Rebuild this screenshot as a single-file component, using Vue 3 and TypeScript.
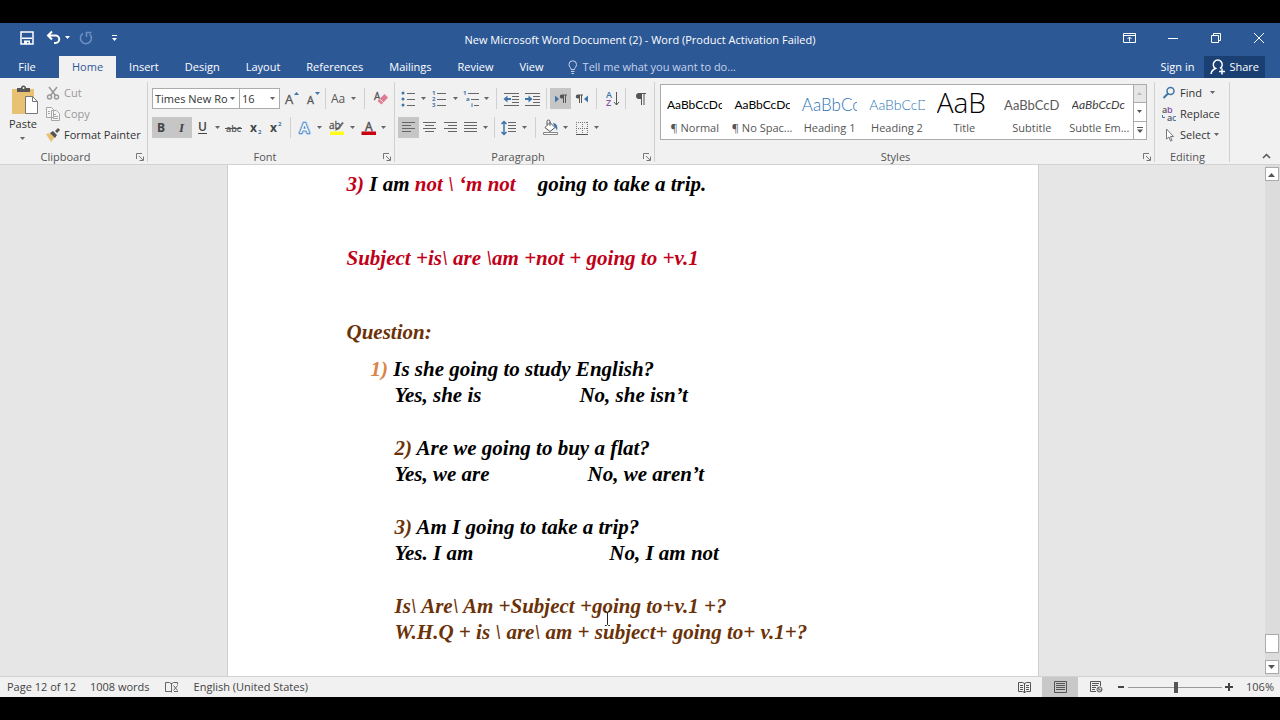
<script setup lang="ts">
import { ref } from 'vue'

interface Tool {
  id: string
  label?: string
  size?: string
  on?: boolean
}

const caret = (label: string): Tool => ({ id: 'caret', label, size: 'w10' })
const sep = (size = 'w7'): Tool => ({ id: 'sep', size })

const fontRow1: Tool[] = [
  { id: 'grow', label: 'Increase Font Size' },
  { id: 'shrink', label: 'Decrease Font Size' },
  sep(),
  { id: 'case', label: 'Change Case', size: 'w20' },
  caret('Change Case options'),
  sep('w11'),
  { id: 'eraser', label: 'Clear All Formatting' },
]

const fontRow2: Tool[] = [
  { id: 'bold', label: 'Bold', size: 'w20', on: true },
  { id: 'italic', label: 'Italic', size: 'w20', on: true },
  { id: 'underline', label: 'Underline' },
  caret('Underline options'),
  { id: 'strike', label: 'Strikethrough', size: 'w22' },
  { id: 'sub', label: 'Subscript' },
  { id: 'sup', label: 'Superscript' },
  sep(),
  { id: 'effects', label: 'Text Effects' },
  caret('Text Effects options'),
  { id: 'highlight', label: 'Text Highlight Color', size: 'w23' },
  caret('Highlight options'),
  { id: 'color', label: 'Font Color' },
  caret('Font Color options'),
]

const paraRow1: Tool[] = [
  { id: 'bullets', label: 'Bullets' },
  caret('Bullet options'),
  { id: 'numbers', label: 'Numbering', size: 'w22' },
  caret('Numbering options'),
  { id: 'levels', label: 'Multilevel List' },
  caret('Multilevel options'),
  sep('w9'),
  { id: 'outdent', label: 'Decrease Indent' },
  { id: 'indent', label: 'Increase Indent' },
  sep(),
  { id: 'ltr', label: 'Left-to-Right', on: true },
  { id: 'rtl', label: 'Right-to-Left' },
  sep('w9'),
  { id: 'sort', label: 'Sort' },
  sep(),
  { id: 'marks', label: 'Show Marks' },
]

const paraRow2: Tool[] = [
  { id: 'left', label: 'Align Left', on: true },
  { id: 'center', label: 'Center' },
  { id: 'right', label: 'Align Right' },
  { id: 'justify', label: 'Justify', size: 'w20' },
  caret('Justify options'),
  sep('w7'),
  { id: 'spacing', label: 'Line Spacing', size: 'w22' },
  caret('Spacing options'),
  sep('w11'),
  { id: 'shading', label: 'Shading', size: 'w20' },
  caret('Shading options'),
  { id: 'borders', label: 'Borders' },
  caret('Border options'),
]

const G = '#555'
const B = '#3f74a8'
const lines = (rows: number[][], c = '#666') =>
  `<path stroke="${c}" d="${rows.map(([x, y, w]) => `M${x} ${y}h${w}`).join('')}"/>`

/* Glyphs are drawn on a 20 x 20 grid. */
const glyphs: Record<string, string> = {
  grow: `<text x="4" y="15" font-size="13" fill="${G}" stroke="${G}" stroke-width=".3">A</text><path fill="${B}" d="M13 6l2.500-3 2.500 3z"/>`,
  shrink: `<text x="5" y="15" font-size="11" fill="${G}" stroke="${G}" stroke-width=".3">A</text><path fill="${B}" d="M13 3h5l-2.500 3z"/>`,
  case: `<text x="2" y="14" font-size="12" fill="${G}">Aa</text>`,
  eraser: `<text x="3" y="11" font-size="10" fill="${G}" stroke="${G}" stroke-width=".3">A</text><path fill="#e07a92" d="M13.500 5l3.500 3.500-6.500 7-4-3.500z"/><path stroke="#f1f1f1" d="M8.500 10l4 3.500"/>`,
  bold: `<text x="5" y="14" font-size="12" font-weight="700" fill="#444">B</text>`,
  italic: `<text x="7" y="14" font-size="13" font-style="italic" font-weight="700" font-family="Liberation Serif" fill="#444">I</text>`,
  underline: `<text x="5" y="13" font-size="12" font-weight="600" fill="#444">U</text><path stroke="#444" d="M5 15.500h9"/>`,
  strike: `<text x="2" y="14" font-size="9" font-weight="600" fill="${G}">abc</text><path stroke="${G}" d="M1 10.500h17"/>`,
  sub: `<text x="4" y="14" font-size="12" font-weight="700" fill="#444">x</text><text x="12" y="16" font-size="6" font-weight="700" fill="${B}">2</text>`,
  sup: `<text x="3" y="14" font-size="12" font-weight="700" fill="#444">x</text><text x="11" y="8" font-size="6" font-weight="700" fill="${B}">2</text>`,
  effects: `<g font-size="14" stroke-linejoin="round"><text x="5" y="15" fill="#b5d3ee" stroke="#b5d3ee" stroke-width="4">A</text><text x="5" y="15" fill="#3a78b8" stroke="#3a78b8" stroke-width="2">A</text><text x="5" y="15" fill="#fff" stroke="#fff" stroke-width=".4">A</text></g>`,
  highlight: `<text x="2" y="11" font-size="10" fill="${G}" stroke="${G}" stroke-width=".3">ab</text><path stroke="#666" stroke-width="2" d="M16 4.500l-5 6.500"/><path fill="${G}" d="M8 13l2-3.500 2 1.500z"/><path fill="#ffff1a" d="M3 13.500h14v3.500H3z"/>`,
  color: `<text x="6" y="13" font-size="12" fill="${G}" stroke="${G}" stroke-width=".5">A</text><path fill="#c80010" d="M2.500 13.500H17v3.500H2.500z"/>`,
  bullets: `<g fill="${B}"><circle cx="4" cy="4" r="1.500"/><circle cx="4" cy="10" r="1.500"/><circle cx="4" cy="16" r="1.500"/></g>${lines([[8, 4.5, 8], [8, 10.5, 8], [8, 16.5, 8]])}`,
  numbers: `<g fill="${B}" font-size="6" font-weight="700"><text x="2" y="6">1</text><text x="2" y="12">2</text><text x="2" y="18">3</text></g>${lines([[7, 4.5, 9], [7, 10.5, 9], [7, 16.5, 9]])}`,
  levels: `<g fill="${B}" font-size="6" font-weight="700"><text x="1" y="6">1</text><text x="4" y="12">a</text><text x="9" y="18">i</text></g>${lines([[6, 4.5, 11], [9, 10.5, 8], [12, 16.5, 5]])}`,
  outdent: `${lines([[2, 4.5, 15], [10, 7.5, 7], [10, 10.5, 7], [10, 13.5, 7], [2, 16.5, 15]])}<path stroke="${B}" stroke-width="2" d="M4 10h5"/><path fill="${B}" d="M1.500 10l4-3.500v7z"/>`,
  indent: `${lines([[2, 4.5, 15], [10, 7.5, 7], [10, 10.5, 7], [10, 13.5, 7], [2, 16.5, 15]])}<path stroke="${B}" stroke-width="2" d="M2 10h5"/><path fill="${B}" d="M9.500 10l-4-3.500v7z"/>`,
  ltr: `<path fill="${B}" d="M4 6.500v7l4-3.500z"/><path fill="${G}" d="M10.500 5.500H16v1h-1v7.500h-1V6.500h-1V14h-1v-4.500h-1a2 2 0 0 1-.500-4z"/>`,
  rtl: `<path fill="${B}" d="M16 6.500v7l-4-3.500z"/><path fill="${G}" d="M5.500 5.500H11v1h-1V14H9V6.500H8V14H7V9.500H6a2 2 0 0 1-.500-4z"/>`,
  sort: `<text x="4" y="9" font-size="9" font-weight="600" fill="${B}">A</text><text x="4" y="17" font-size="9" font-weight="600" fill="#8a4fa8">Z</text><path fill="none" stroke="${G}" d="M14.500 3v13M12 13l2.500 3 2.500-3"/>`,
  marks: `<path fill="${G}" d="M9 4h7v1h-1.500v11h-1V5H12v11h-1v-6H9a3 3 0 0 1 0-6z"/>`,
  left: lines([[3, 4.5, 13], [3, 7.5, 9], [3, 10.5, 13], [3, 13.5, 9]]),
  center: lines([[3, 4.5, 13], [5, 7.5, 9], [3, 10.5, 13], [5, 13.5, 9]]),
  right: lines([[3, 4.5, 13], [7, 7.5, 9], [3, 10.5, 13], [7, 13.5, 9]]),
  justify: lines([[3, 4.5, 13], [3, 7.5, 13], [3, 10.5, 13], [3, 13.5, 13]]),
  spacing: `${lines([[9, 4.5, 8], [9, 7.5, 8], [9, 10.5, 8], [9, 13.5, 8]])}<path fill="none" stroke="${B}" stroke-width="1.500" d="M5 4v12M2.500 6L5 3.500 7.500 6M2.500 14L5 16.500 7.500 14"/>`,
  shading: `<path fill="#fff" stroke="${G}" d="M4 9.500l5-5 5 5-5 4z"/><path fill="none" stroke="${G}" d="M9 8V3.500a1.500 1.500 0 0 0-3 0V7"/><path fill="${B}" d="M12 5c4 0 5 4 4 7.500-1-2-1.500-3-2.500-4z"/><path fill="#fff" stroke="#888" d="M2.500 14.500h14v2h-14z"/>`,
  borders: `<path stroke="#777" stroke-dasharray="1 1" fill="none" d="M4 4.500h12M4 10.500h12M4.500 4v12M10.500 4v12M15.500 4v12"/><path stroke="#555" d="M4 16.500h12"/>`,
}

const tabs = ['File', 'Home', 'Insert', 'Design', 'Layout', 'References', 'Mailings', 'Review', 'View']

const styles = [
  { name: '¶ Normal', sample: 'AaBbCcDc', look: 'body' },
  { name: '¶ No Spac...', sample: 'AaBbCcDc', look: 'body' },
  { name: 'Heading 1', sample: 'AaBbCc', look: 'h-one' },
  { name: 'Heading 2', sample: 'AaBbCcD', look: 'h-two' },
  { name: 'Title', sample: 'AaB', look: 'big' },
  { name: 'Subtitle', sample: 'AaBbCcD', look: 'subtitle' },
  { name: 'Subtle Em...', sample: 'AaBbCcDc', look: 'emphasis' },
]

const zoom = ref(51)
const toolGroups = { fontRow1, fontRow2, paraRow1, paraRow2 }
</script>

<template>
  <div class="window">
    <header class="chrome">
      <div class="titlebar">
        <div class="quick">
          <button aria-label="Save">
            <svg width="16" height="16" viewBox="0 0 16 16"><path fill="none" stroke="#fff" stroke-width="1.500" d="M2 2h12v12H2z" /><path fill="#fff" d="M3 7.500h10V9H3zM5 10.500h6V14H9.500v-2H8v2H5z" /></svg>
          </button>
          <button aria-label="Undo" class="undo">
            <svg width="16" height="16" viewBox="0 0 16 16"><path fill="none" stroke="#fff" stroke-width="2" d="M3 5.500h7.500a3.500 3.500 0 0 1 0 7.500H9M7 1.500l-4 4 4 4" /></svg>
            <svg width="6" height="4" viewBox="0 0 6 4"><path fill="#fff" d="M0 0h5L2.500 3z" /></svg>
          </button>
          <button aria-label="Redo">
            <svg width="16" height="16" viewBox="0 0 16 16"><path fill="none" stroke="#6f8fc2" stroke-width="1.500" d="M4 3.500a5.500 5.500 0 1 0 6.500.500M7.500 7V2.500h5" /></svg>
          </button>
          <button aria-label="Customize Quick Access Toolbar">
            <svg width="8" height="8" viewBox="0 0 8 8"><path fill="#fff" d="M1 1h5v1H1zM1 4h5L3.500 7z" /></svg>
          </button>
        </div>
        <div class="caption">New Microsoft Word Document (2) - Word (Product Activation Failed)</div>
        <div class="controls">
          <button aria-label="Ribbon Display Options">
            <svg width="14" height="12" viewBox="0 0 14 12"><path fill="none" stroke="#fff" d="M.5 1.500h12v9H.5zM.5 3.500h12M6.500 9.500V5M4.500 7l2-2 2 2" /></svg>
          </button>
          <button aria-label="Minimize">
            <svg width="12" height="12" viewBox="0 0 12 12"><path stroke="#fff" d="M1 6.500h10" /></svg>
          </button>
          <button aria-label="Restore">
            <svg width="12" height="12" viewBox="0 0 12 12"><path fill="none" stroke="#fff" d="M1.500 3.500h7v7h-7zM3.500 3.500v-2h7v7h-2" /></svg>
          </button>
          <button aria-label="Close">
            <svg width="12" height="12" viewBox="0 0 12 12"><path stroke="#fff" d="M1 1l10 10M11 1L1 11" /></svg>
          </button>
        </div>
      </div>
      <nav class="tabs">
        <button v-for="t in tabs" :key="t" :class="['tab', { active: t === 'Home', file: t === 'File' }]">{{ t }}</button>
        <button class="tell">
          <svg width="12" height="14" viewBox="0 0 12 14"><path fill="none" stroke="#c5d3ea" d="M4 9.500C4 7.500 2 7 2 4.500a3.500 3.500 0 0 1 7.500 0C9.500 7 7.500 7.500 7.500 9.500zM4 11.500h3.500M4.500 13.500h2.500" /></svg>
          Tell me what you want to do...
        </button>
        <button class="signin">Sign in</button>
        <button class="share">
          <svg width="16" height="16" viewBox="0 0 16 16"><path fill="none" stroke="#fff" stroke-width="1.500" d="M1 15c.5-3 2-4.500 4.500-5.500a4.500 4.500 0 1 1 4.500 0M9 12.500h6M12 9.500v6" /></svg>
          Share
        </button>
      </nav>
    </header>

    <section class="ribbon">
      <div class="group clipboard">
        <div class="body-area">
          <button class="paste">
            <svg width="30" height="30" viewBox="0 0 30 30"><path fill="#e8c272" d="M4 4h22v25H4z" /><path fill="#555" d="M9 3h4a2.500 2.500 0 0 1 5 0h4v4H9z" /><circle cx="15.500" cy="3" r="1" fill="#f1f1f1" /><path fill="#fff" stroke="#777" d="M17.500 11.500h7l5 5v12h-12z" /><path fill="none" stroke="#777" d="M24.500 11.500v5h5" /></svg>
            <span>Paste</span>
            <svg width="6" height="4" viewBox="0 0 6 4"><path fill="#666" d="M0 0h5L2.500 3z" /></svg>
          </button>
          <div class="clip-list">
            <button class="dim">
              <svg width="14" height="14" viewBox="0 0 14 14"><g fill="none" stroke="#999" stroke-width="1.500"><path d="M3 1l6.500 8.500M11 1L4.500 9.500" /><circle cx="3.500" cy="11" r="2" /><circle cx="10.500" cy="11" r="2" /></g></svg>
              Cut
            </button>
            <button class="dim">
              <svg width="14" height="14" viewBox="0 0 14 14"><path fill="#f6f6f6" stroke="#a6a6a6" d="M.5.5h5l2 2v8h-7zM5.500 3.500h5l3 3v7h-8z" /><path stroke="#a6a6a6" d="M2 4.500h2M2 6.500h2M7 7.500h3M7 9.500h5M7 11.500h5" /></svg>
              Copy
            </button>
            <button>
              <svg width="14" height="14" viewBox="0 0 14 14"><path fill="#e8c272" d="M0 6l5-1 4 4-4 5z" /><path fill="#555" d="M4 5l3-2 4 4-2 3zM9 3l3-3 2 2-3 3z" /></svg>
              Format Painter
            </button>
          </div>
        </div>
        <footer><span>Clipboard</span><button class="launch" aria-label="Clipboard settings"><svg width="8" height="8" viewBox="0 0 8 8"><path fill="none" stroke="#777" d="M.5 6V.5H6M3 3l4 4M7.500 3.500v4h-4" /></svg></button></footer>
      </div>

      <div class="group font">
        <div class="rows">
          <div class="row">
            <div class="picker face">
              <select aria-label="Font"><option>Times New Ro</option></select>
              <svg width="6" height="4" viewBox="0 0 6 4"><path fill="#666" d="M0 0h5L2.500 3z" /></svg>
            </div>
            <div class="picker size">
              <select aria-label="Font Size"><option>16</option></select>
              <svg width="6" height="4" viewBox="0 0 6 4"><path fill="#666" d="M0 0h5L2.500 3z" /></svg>
            </div>
            <template v-for="(t, i) in toolGroups.fontRow1" :key="i">
              <i v-if="t.id === 'sep'" :class="['sep', t.size]"></i>
              <button v-else :class="['tool', t.size, { on: t.on }]" :aria-label="t.label">
                <svg v-if="t.id === 'caret'" width="6" height="4" viewBox="0 0 6 4"><path fill="#666" d="M0 0h5L2.500 3z" /></svg>
                <svg v-else width="20" height="20" viewBox="0 0 20 20" v-html="glyphs[t.id]"></svg>
              </button>
            </template>
          </div>
          <div class="row">
            <template v-for="(t, i) in toolGroups.fontRow2" :key="i">
              <i v-if="t.id === 'sep'" :class="['sep', t.size]"></i>
              <button v-else :class="['tool', t.size, { on: t.on }]" :aria-label="t.label">
                <svg v-if="t.id === 'caret'" width="6" height="4" viewBox="0 0 6 4"><path fill="#666" d="M0 0h5L2.500 3z" /></svg>
                <svg v-else width="20" height="20" viewBox="0 0 20 20" v-html="glyphs[t.id]"></svg>
              </button>
            </template>
          </div>
        </div>
        <footer><span>Font</span><button class="launch" aria-label="Font settings"><svg width="8" height="8" viewBox="0 0 8 8"><path fill="none" stroke="#777" d="M.5 6V.5H6M3 3l4 4M7.500 3.500v4h-4" /></svg></button></footer>
      </div>

      <div class="group paragraph">
        <div class="rows">
          <div v-for="(r, n) in [toolGroups.paraRow1, toolGroups.paraRow2]" :key="n" class="row">
            <template v-for="(t, i) in r" :key="i">
              <i v-if="t.id === 'sep'" :class="['sep', t.size]"></i>
              <button v-else :class="['tool', t.size, { on: t.on }]" :aria-label="t.label">
                <svg v-if="t.id === 'caret'" width="6" height="4" viewBox="0 0 6 4"><path fill="#666" d="M0 0h5L2.500 3z" /></svg>
                <svg v-else width="20" height="20" viewBox="0 0 20 20" v-html="glyphs[t.id]"></svg>
              </button>
            </template>
          </div>
        </div>
        <footer><span>Paragraph</span><button class="launch" aria-label="Paragraph settings"><svg width="8" height="8" viewBox="0 0 8 8"><path fill="none" stroke="#777" d="M.5 6V.5H6M3 3l4 4M7.500 3.500v4h-4" /></svg></button></footer>
      </div>

      <div class="group styles">
        <div class="gallery">
          <button v-for="s in styles" :key="s.name" class="style">
            <span :class="['sample', s.look]">{{ s.sample }}</span>
            <span class="name">{{ s.name }}</span>
          </button>
          <div class="steps">
            <button class="off" aria-label="Previous styles"><svg width="6" height="4" viewBox="0 0 6 4"><path fill="#bbb" d="M0 3h5L2.500 0z" /></svg></button>
            <button aria-label="Next styles"><svg width="6" height="4" viewBox="0 0 6 4"><path fill="#555" d="M0 0h5L2.500 3z" /></svg></button>
            <button aria-label="More styles"><svg width="6" height="6" viewBox="0 0 6 6"><path fill="#555" d="M0 0h6v1H0zM0 2.500h6L3 6z" /></svg></button>
          </div>
        </div>
        <footer><span>Styles</span><button class="launch" aria-label="Styles settings"><svg width="8" height="8" viewBox="0 0 8 8"><path fill="none" stroke="#777" d="M.5 6V.5H6M3 3l4 4M7.500 3.500v4h-4" /></svg></button></footer>
      </div>

      <div class="group editing">
        <div class="edit-list">
          <button>
            <svg width="14" height="14" viewBox="0 0 14 14"><circle cx="8.500" cy="5" r="3.500" fill="none" stroke="#3f74a8" stroke-width="1.500" /><path stroke="#3f74a8" stroke-width="2" d="M6 7.500L1.500 12" /></svg>
            Find
            <svg class="gap" width="6" height="4" viewBox="0 0 6 4"><path fill="#666" d="M0 0h5L2.500 3z" /></svg>
          </button>
          <button>
            <svg width="14" height="14" viewBox="0 0 14 14"><text x="0" y="6" font-size="9" font-weight="600" fill="#555">a</text><text x="5" y="6" font-size="9" font-weight="600" fill="#8a4fa8">b</text><text x="5" y="14" font-size="9" font-weight="600" fill="#555">a</text><text x="10" y="14" font-size="9" font-weight="600" fill="#3f74a8">c</text><path fill="none" stroke="#3f74a8" d="M.5 8v2.500H3" /></svg>
            Replace
          </button>
          <button>
            <svg width="14" height="14" viewBox="0 0 14 14"><path fill="#fff" stroke="#777" d="M4.500 1v10L7 9l1.500 4 1.500-.500L8.500 8.500h3z" /></svg>
            Select
            <svg width="6" height="4" viewBox="0 0 6 4"><path fill="#666" d="M0 0h5L2.500 3z" /></svg>
          </button>
        </div>
        <footer><span>Editing</span></footer>
      </div>
      <button class="collapse" aria-label="Collapse the Ribbon"><svg width="9" height="6" viewBox="0 0 9 6"><path fill="none" stroke="#555" stroke-width="1.500" d="M1 5l3.500-3.500L8 5" /></svg></button>
    </section>

    <main class="desk">
      <div class="canvas">
        <article class="page">
          <p class="line"><span class="red">3) </span>I am <span class="red">not \ ‘m not</span><span class="after">going to take a trip.</span></p>
          <p class="line red formula">Subject +is\ are \am +not + going to +v.1</p>
          <h2 class="line brown">Question:</h2>
          <ol>
            <li>
              <p class="hang"><span class="orange">1) </span>Is she going to study English?</p>
              <p class="answers"><span>Yes, she is</span><span>No, she isn’t</span></p>
            </li>
            <li>
              <p><span class="brown">2) </span>Are we going to buy a flat?</p>
              <p class="answers"><span>Yes, we are</span><span>No, we aren’t</span></p>
            </li>
            <li>
              <p><span class="brown">3) </span>Am I going to take a trip?</p>
              <p class="answers far"><span>Yes. I am</span><span>No, I am not</span></p>
            </li>
            <li class="brown">
              <p>Is\ Are\ Am +Subject +going to+v.1 +?</p>
              <p>W.H.Q + is \ are\ am + subject+ going to+ v.1+?</p>
            </li>
          </ol>
          <svg class="ibeam" width="7" height="15" viewBox="0 0 7 15"><path fill="none" stroke="#222" d="M1 .5h1.500l1 1 1-1H6M3.500 1.500v12M1 14.500h1.500l1-1 1 1H6" /></svg>
        </article>
      </div>
      <div class="scroll">
        <button aria-label="Scroll up"><svg width="8" height="5" viewBox="0 0 8 5"><path fill="#555" d="M0 5h7L3.500 1z" /></svg></button>
        <div class="track"><div class="thumb"></div></div>
        <button aria-label="Scroll down"><svg width="8" height="5" viewBox="0 0 8 5"><path fill="#555" d="M0 0h7L3.500 4z" /></svg></button>
      </div>
    </main>

    <footer class="status">
      <button class="pages">Page 12 of 12</button>
      <button class="words">1008 words</button>
      <button class="proof" aria-label="Proofing errors">
        <svg width="14" height="12" viewBox="0 0 14 12"><path fill="none" stroke="#666" d="M6.500 2v9.500M6.500 10.500h-6v-9h4l2 1.500 2-1.500h4v2M8.500 4.500l4 5M12.500 4.500l-4 5M9 10.500h4" /></svg>
      </button>
      <button class="lang">English (United States)</button>
      <button class="view" aria-label="Read Mode">
        <svg width="13" height="12" viewBox="0 0 13 12"><path fill="none" stroke="#555" d="M6.500 2v10M.5 1.500h4l2 1 2-1h4v9h-4l-2 1-2-1h-4zM2 4.500h3M2 6.500h3M2 8.500h3M8 4.500h3M8 6.500h3M8 8.500h3" /></svg>
      </button>
      <button class="view on" aria-label="Print Layout">
        <svg width="13" height="12" viewBox="0 0 13 12"><path fill="none" stroke="#555" d="M.5.500h12v11H.5zM2 2.500h9M2 4.500h9M2 6.500h9M2 8.500h9" /></svg>
      </button>
      <button class="view" aria-label="Web Layout">
        <svg width="13" height="12" viewBox="0 0 13 12"><path fill="none" stroke="#555" d="M6 10.500H.5V.500h10V5M2 2.500h7M2 4.500h6M2 6.500h4M2 8.500h3" /><circle cx="9.500" cy="8.500" r="2.500" fill="#ddd" stroke="#555" /><path fill="#555" d="M8 7l2 1-1 2zM10 9l2-1-1 2z" /></svg>
      </button>
      <button class="step" aria-label="Zoom out"><svg width="8" height="8" viewBox="0 0 8 8"><path stroke="#444" stroke-width="2" d="M1 4h6" /></svg></button>
      <input v-model="zoom" class="slider" type="range" min="0" max="100" aria-label="Zoom" />
      <button class="step" aria-label="Zoom in"><svg width="8" height="8" viewBox="0 0 8 8"><path stroke="#444" stroke-width="2" d="M0 4h8M4 0v8" /></svg></button>
      <button class="percent">106%</button>
    </footer>
  </div>
</template>

<style>
html,
body {
  margin: 0;
  background: #000;
}
</style>

<style scoped>
.window {
  box-sizing: border-box;
  height: 100vh;
  padding: 23px 0;
  display: flex;
  flex-direction: column;
  background: #000;
  font-family: "Open Sans", "Noto Sans", sans-serif;
  font-size: 11px;
  line-height: 16px;
  color: #333;
}
button {
  display: flex;
  align-items: center;
  justify-content: center;
  border: 0;
  padding: 0;
  margin: 0;
  background: none;
  color: inherit;
  font: inherit;
  white-space: nowrap;
}
svg {
  display: block;
  flex: none;
}
p,
h2,
ol {
  margin: 0;
  padding: 0;
  list-style: none;
}
.chrome {
  background: #2d5896;
  color: #fff;
}
.titlebar {
  display: grid;
  grid-template-columns: 1fr auto 1fr;
  align-items: center;
  height: 33px;
}
.quick {
  display: flex;
  align-items: center;
  gap: 10px;
  padding: 0 0 4px 19px;
}
.quick button {
  height: 20px;
}
.quick button:nth-child(3) {
  margin-left: -2px;
}
.quick button:nth-child(4) {
  margin-left: 6px;
}
.undo {
  gap: 4px;
}
.controls {
  display: flex;
  justify-content: flex-end;
  padding-bottom: 4px;
}
.controls button {
  width: 43px;
}
.tabs {
  display: flex;
  height: 22px;
}
.tab {
  padding: 0 13px;
}
.tab.file {
  width: 59px;
  padding: 0 5px 0 0;
}
.tab.active {
  background: #f1f1f1;
  color: #2d5896;
}
.tell {
  gap: 4px;
  padding: 0 10px;
  color: #c5d3ea;
}
.signin {
  margin-left: auto;
  padding: 0 10px;
}
.share {
  gap: 3px;
  padding: 0 6px;
  margin-right: 15px;
  background: #1a3f73;
}
.ribbon {
  display: flex;
  height: 86px;
  flex: none;
  background: #f1f1f1;
  border-bottom: 1px solid #d2d2d2;
}
.group {
  box-sizing: border-box;
  display: flex;
  flex-direction: column;
  margin: 4px 0 2px;
  border-right: 1px solid #d0d0d0;
}
.group > footer {
  margin-top: auto;
  position: relative;
  padding-right: 16px;
  line-height: 10px;
  text-align: center;
  color: #555;
}
.launch {
  position: absolute;
  right: 3px;
  top: 1px;
}
.clipboard {
  width: 148px;
}
.body-area {
  display: flex;
}
.paste {
  width: 46px;
  flex-direction: column;
  justify-content: flex-start;
  padding-top: 3px;
}
.paste span {
  line-height: 18px;
  margin-bottom: 4px;
}
.clip-list,
.edit-list {
  display: flex;
  flex-direction: column;
  align-items: flex-start;
}
.clip-list button,
.edit-list button {
  height: 21px;
  gap: 4px;
}
.dim {
  color: #999;
}
.font {
  width: 247px;
  padding-left: 4px;
}
.paragraph {
  width: 260px;
  padding-left: 3px;
}
.rows {
  display: flex;
  flex-direction: column;
  gap: 8px;
  padding-top: 6px;
}
.row {
  display: flex;
  height: 21px;
}
.tool {
  width: 21px;
}
.tool.on {
  background: #c6c6c6;
}
.w7 { width: 7px; }
.w9 { width: 9px; }
.w10 { width: 10px; }
.w11 { width: 11px; }
.w20 { width: 20px; }
.w22 { width: 22px; }
.w23 { width: 23px; }
.sep {
  display: flex;
  justify-content: center;
}
.sep::before {
  content: "";
  width: 1px;
  background: #d0d0d0;
}
.picker {
  position: relative;
  box-sizing: border-box;
  display: flex;
  border: 1px solid #ababab;
  background: #fff;
}
.picker + .picker {
  border-left: 0;
}
.picker select {
  appearance: none;
  width: 100%;
  border: 0;
  padding: 0 10px 0 2px;
  background: none;
  font: inherit;
  color: #333;
}
.picker svg {
  position: absolute;
  right: 3px;
  top: 8px;
  pointer-events: none;
}
.face {
  width: 88px;
}
.size {
  width: 40px;
}
.styles {
  flex: 1;
  min-width: 0;
  padding: 2px 7px 0 5px;
}
.gallery {
  display: flex;
  box-sizing: border-box;
  height: 56px;
  border: 1px solid #ababab;
  background: #fff;
}
.style {
  flex: 1;
  min-width: 0;
  flex-direction: column;
  justify-content: flex-end;
  overflow: hidden;
  padding: 0 6px 3px;
  color: #555;
}
.sample {
  width: 100%;
  height: 34px;
  line-height: 38px;
  overflow: hidden;
  text-align: left;
  font-family: Lato, sans-serif;
  font-size: 12px;
  color: #000;
}
.sample.h-one {
  font-size: 17px;
  font-weight: 300;
  color: #2e74b5;
}
.sample.h-two {
  font-size: 14px;
  font-weight: 300;
  color: #2e74b5;
}
.sample.big {
  font-family: "Open Sans", sans-serif;
  font-size: 28px;
  font-weight: 300;
  line-height: 32px;
}
.sample.subtitle {
  font-size: 13px;
  color: #5a5a5a;
}
.sample.emphasis {
  font-style: italic;
  color: #404040;
}
.steps {
  display: flex;
  flex-direction: column;
  width: 12px;
  border-left: 1px solid #ababab;
}
.steps button {
  flex: 1;
}
.steps button + button {
  border-top: 1px solid #ababab;
}
.steps .off {
  background: #e6e6e6;
}
.styles .launch {
  right: -4px;
}
.editing {
  width: 75px;
  padding-left: 7px;
}
.gap {
  margin-left: 4px;
}
.collapse {
  align-self: flex-end;
  width: 50px;
  height: 16px;
  padding-left: 22px;
}
.desk {
  flex: 1;
  min-height: 0;
  display: flex;
  background: #e6e6e6;
}
.canvas {
  flex: 1;
  display: flex;
  justify-content: center;
  overflow: hidden;
}
.page {
  position: relative;
  box-sizing: border-box;
  width: 812px;
  padding: 6px 24px 24px 119px;
  border: 1px solid #cfcfcf;
  border-width: 0 1px;
  background: #fff;
  color: #000;
  font: italic 700 21px/26px "Liberation Serif", "Times New Roman", serif;
}
.page h2 {
  font: inherit;
}
.line {
  margin-bottom: 48px;
}
.page h2.line {
  margin-bottom: 11px;
}
.after {
  margin-left: 22px;
}
.red { color: #c00018; }
.brown { color: #6b3208; }
.orange { color: #d98448; }
li {
  padding-left: 48px;
  margin-bottom: 27px;
}
.hang {
  margin-left: -24px;
}
.answers {
  display: flex;
  gap: 98px;
}
.answers.far {
  gap: 136px;
}
.ibeam {
  position: absolute;
  left: 376px;
  top: 446px;
}
.scroll {
  display: flex;
  flex-direction: column;
  width: 14px;
  padding: 2px 1px 2px 0;
  background: #dcdcdc;
}
.scroll button {
  height: 14px;
  border: 1px solid #ababab;
  background: #fff;
}
.track {
  flex: 1;
  display: flex;
  flex-direction: column;
  justify-content: flex-end;
  padding-bottom: 7px;
}
.thumb {
  height: 17px;
  border: 1px solid #ababab;
  background: #fff;
}
.status {
  display: flex;
  flex: none;
  height: 20px;
  border-top: 1px solid #d2d2d2;
  background: #f1f1f1;
  color: #444;
  padding: 0 6px 0 7px;
}
.words {
  margin-left: 14px;
}
.proof {
  margin: 0 15px;
}
.lang {
  margin-right: auto;
}
.view {
  width: 36px;
}
.view.on {
  background: #c8c8c8;
}
.step {
  width: 14px;
}
.slider {
  appearance: none;
  width: 94px;
  height: 20px;
  margin: 0;
  background: linear-gradient(#999, #999) center / 100% 1px no-repeat;
}
.slider::-webkit-slider-thumb {
  appearance: none;
  width: 4px;
  height: 11px;
  background: #555;
}
.percent {
  margin-left: 10px;
}
</style>
